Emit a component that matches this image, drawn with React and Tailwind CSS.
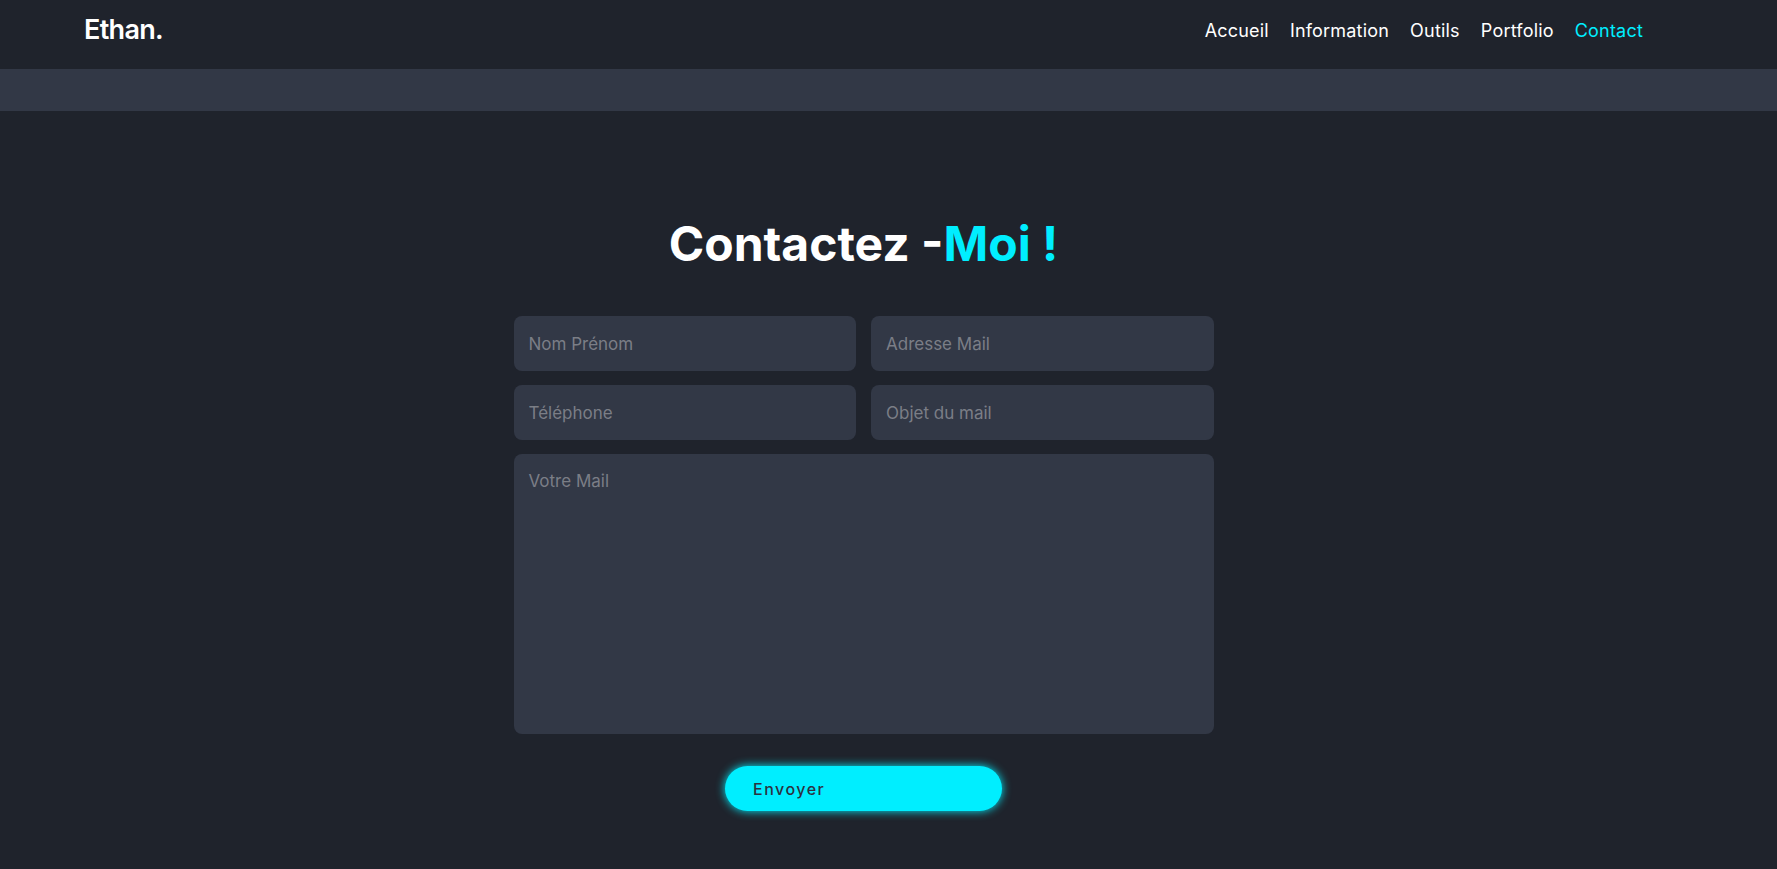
import React from 'react';

const links = ['Accueil', 'Information', 'Outils', 'Portfolio', 'Contact'];

const fieldClass =
    'w-full h-[55px] rounded-lg bg-[#323846] px-[15px] text-[17px] text-white placeholder:text-[#7b7e86] outline-none';

const App = () => {
    return (
        <div className="min-h-[869px] bg-[#1f232c] font-['Inter',sans-serif] text-white">
            {/* Header */}
            <header className="h-[69px] flex items-center justify-between pl-[84px] pr-[134px] pb-[8px]">
                <div className="text-[27px] font-semibold tracking-tight">Ethan.</div>
                <nav className="flex items-center gap-[21px]">
                    {links.map(link => (
                        <a
                            key={link}
                            href="#"
                            className={`text-[18px] tracking-[0.2px] ${link === 'Contact' ? 'text-[#00eeff]' : 'text-white'}`}
                        >
                            {link}
                        </a>
                    ))}
                </nav>
            </header>
            <div className="h-[42px] bg-[#323846]" />

            {/* Contact */}
            <main className="flex flex-col items-center pt-[109px] pb-[58px] pr-[50px]">
                <h1 className="text-[48px] leading-none font-bold">
                    Contactez -<span className="text-[#00eeff]">Moi !</span>
                </h1>

                <form className="mt-[48px] w-[700px] flex flex-col gap-[14px]">
                    <div className="grid grid-cols-2 gap-[15px]">
                        <input type="text" placeholder="Nom Prénom" className={fieldClass} />
                        <input type="email" placeholder="Adresse Mail" className={fieldClass} />
                    </div>
                    <div className="grid grid-cols-2 gap-[15px]">
                        <input type="text" placeholder="Téléphone" className={fieldClass} />
                        <input type="text" placeholder="Objet du mail" className={fieldClass} />
                    </div>
                    <textarea
                        placeholder="Votre Mail"
                        className="w-full h-[280px] resize-none rounded-lg bg-[#323846] px-[15px] pt-[15px] pb-[13px] text-[17px] text-white placeholder:text-[#7b7e86] outline-none"
                    />
                </form>

                <button
                    type="button"
                    className="mt-[32px] w-[277px] h-[45px] rounded-full bg-[#00eeff] text-left pl-[28px] text-[16px] font-medium tracking-[1.5px] text-[#2c3140] shadow-[0_0_10px_#00eeff]"
                >
                    Envoyer
                </button>
            </main>
        </div>
    );
};

export default App;
